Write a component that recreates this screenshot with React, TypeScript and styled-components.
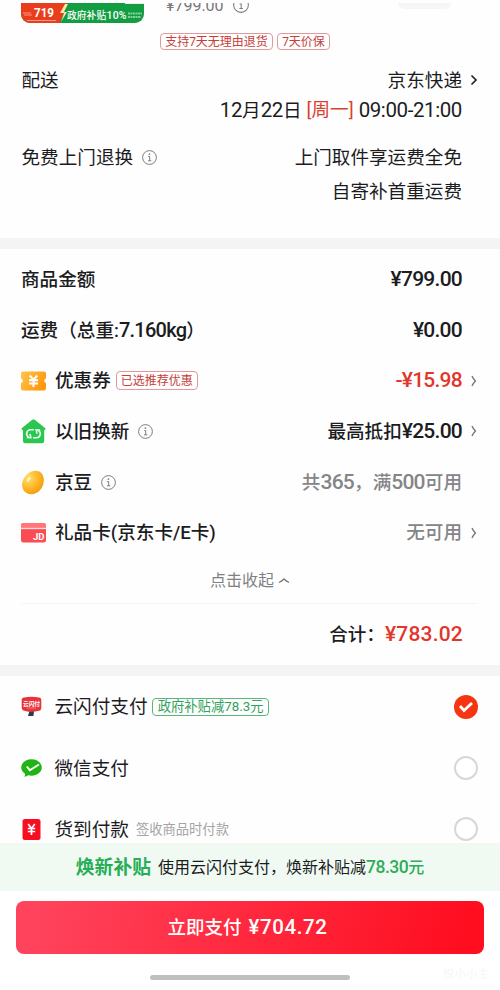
import React from "react";
import styled, { createGlobalStyle } from "styled-components";

const GlobalStyle = createGlobalStyle`
  * { box-sizing: border-box; }
  body {
    margin: 0;
    background: #fff;
    color: #1c1c1e;
    font-family: Roboto, "Noto Sans CJK SC", sans-serif;
    font-size: 18.6px;
    line-height: 1;
  }
`;

const Page = styled.main`
  width: 500px;
  height: 990px;
  padding-top: 3px;
  display: flex;
  flex-direction: column;
  overflow: hidden;
  background: #fefefe;
`;

const Product = styled.section`
  height: 60px;
  flex: none;
  display: flex;
  align-items: flex-start;
  overflow: hidden;
  padding-left: 21px;
`;

const PromoBadge = styled.div`
  width: 123px;
  height: 20px;
  margin-right: 16px;
  flex: none;
  border-radius: 0 0 9px 9px;
  overflow: hidden;
`;

const ProductInfo = styled.div`
  display: flex;
  flex-direction: column;
  width: 238px;
`;

const ProductPrice = styled.div`
  height: 30px;
  display: flex;
  align-items: flex-start;
  gap: 9px;
  margin: -5px 0 0 6px;
  color: #77777a;
  svg { margin-top: -1px; }
`;

const TagLine = styled.div`
  display: flex;
  gap: 4px;
  margin-top: 5px;
`;

const Stub = styled.div`
  width: 53px;
  height: 6px;
  border-radius: 0 0 6px 6px;
  background: #f6f6f6;
`;

const Tag = styled.span<{ $w: number; $h?: number; $size?: number; $green?: boolean }>`
  width: ${(p) => p.$w}px;
  height: ${(p) => p.$h ?? 17}px;
  flex: none;
  display: inline-flex;
  align-items: center;
  justify-content: center;
  border: 1px solid ${(p) => (p.$green ? "#59b77c" : "#e09a98")};
  border-radius: 4px;
  color: ${(p) => (p.$green ? "#31a25c" : "#c5403b")};
  font-size: ${(p) => p.$size ?? 12}px;
  font-weight: 400;
  white-space: nowrap;
`;

const CouponTag = styled(Tag)`
  margin-left: -4px;
`;

const Delivery = styled.section`
  height: 175px;
  flex: none;
  padding: 0 38px 0 21.5px;
  display: flex;
  flex-direction: column;
`;

const Line = styled.div<{ $h: number }>`
  height: ${(p) => p.$h}px;
  display: flex;
  align-items: center;
  justify-content: space-between;
  white-space: nowrap;
`;

const Divider = styled.div`
  height: 11px;
  flex: none;
  background: #f4f4f4;
`;

const Amounts = styled.section`
  height: 416px;
  flex: none;
  padding: 5px 38px 0 21px;
`;

const Row = styled.div`
  height: 50.7px;
  display: flex;
  align-items: center;
  justify-content: space-between;
  white-space: nowrap;
  font-weight: 500;
`;

const Label = styled.div`
  display: flex;
  align-items: center;
  gap: 9px;
`;

const Value = styled.div<{ $color?: string }>`
  display: flex;
  align-items: center;
  color: ${(p) => p.$color ?? "inherit"};
`;

const Txt = styled.span`
  padding-top: 2px;
`;

const Num = styled.span<{ $size?: number; $ls?: number }>`
  font-size: ${(p) => p.$size ?? 21}px;
  letter-spacing: ${(p) => p.$ls ?? -0.75}px;
`;

const Day = styled.span`
  color: #d8402f;
  margin: 0 5px;
`;

const ChevronSlot = styled.span`
  display: flex;
  width: 8px;
  margin: 0 -16px 0 8px;
`;

const Collapse = styled.div`
  height: 45px;
  display: flex;
  align-items: center;
  justify-content: center;
  gap: 4px;
  margin-right: -17px;
  font-size: 16px;
  color: #808083;
`;

const Total = styled.div`
  height: 62px;
  margin-right: -16px;
  padding-right: 15px;
  border-top: 1px solid #f4f4f4;
  display: flex;
  align-items: center;
  justify-content: flex-end;
  font-weight: 500;
`;

const Payments = styled.section`
  height: 167px;
  flex: none;
  overflow: hidden;
  padding: 0 22px 0 21px;
`;

const PayRow = styled.div`
  height: 61.4px;
  display: flex;
  align-items: center;
  justify-content: space-between;
`;

const PayLabel = styled.div`
  display: flex;
  align-items: center;
  white-space: nowrap;
  svg { margin-right: 12.5px; }
`;

const PayNote = styled.span`
  margin-left: 7px;
  font-size: 13.3px;
  color: #a5a5a5;
`;

const Radio = styled.span<{ $on?: boolean }>`
  width: 24px;
  height: 24px;
  display: flex;
  align-items: center;
  justify-content: center;
  border-radius: 50%;
  border: ${(p) => (p.$on ? "0" : "2px solid #d7d7d7")};
  background: ${(p) => (p.$on ? "#f53610" : "#fff")};
`;

const Subsidy = styled.section`
  height: 48px;
  flex: none;
  display: flex;
  align-items: center;
  justify-content: center;
  background: #f0faf3;
  font-size: 16px;
  white-space: nowrap;
`;

const SubsidyTitle = styled.strong`
  margin-right: 7px;
  padding-top: 2px;
  font-size: 18.8px;
  font-weight: 700;
  color: #27ad55;
`;

const SubsidyAmount = styled.span`
  padding-top: 2px;
  color: #2eac59;
  font-weight: 500;
`;

const Footer = styled.footer`
  height: 99px;
  flex: none;
  padding: 10px 16px 0;
  display: grid;
  grid-template-rows: 53px 21px 5px;
  background: #fff;
`;

const PayButton = styled.button`
  border: 0;
  border-radius: 8px;
  padding: 0 5px 0 0;
  display: flex;
  align-items: center;
  justify-content: center;
  gap: 7px;
  color: #fff;
  font: 500 18.5px/1 Roboto, "Noto Sans CJK SC", sans-serif;
  background: linear-gradient(100deg, #ff435c 5%, #ff0e20 95%);
`;

const Watermark = styled.div`
  align-self: end;
  justify-self: end;
  margin: 0 -5px -5px 0;
  font-size: 11.5px;
  color: #f6f6f6;
`;

const HomeBar = styled.div`
  width: 200px;
  height: 5px;
  justify-self: center;
  border-radius: 3px;
  background: #bfbfbf;
`;

const Info = ({ size = 15 }: { size?: number }) => (
  <svg width={size} height={size} viewBox="0 0 15 15" fill="none" stroke="#7d7d80">
    <circle cx="7.5" cy="7.5" r="6.9" />
    <path d="M6.2 6.5h1.5v4.2M6 10.8h3.3" />
    <circle cx="7.4" cy="4.1" r=".9" fill="#7d7d80" stroke="none" />
  </svg>
);

const Chevron = ({ dark }: { dark?: boolean }) => (
  <ChevronSlot>
    <svg width="8" height="12" viewBox="0 0 8 12" fill="none" stroke={dark ? "#222" : "#77777a"} strokeWidth={dark ? 1.7 : 1.4}>
      <path d={dark ? "M1.5 1.5 6 6 1.5 10.5" : "M2 1 Q3 3.5 5.4 6 Q3 8.5 2 11"} />
    </svg>
  </ChevronSlot>
);

const CouponIcon = () => (
  <svg width="25" height="20" viewBox="0 0 25 20">
    <defs>
      <linearGradient id="coupon" x1="0" y1="0" x2="1" y2=".5">
        <stop stopColor="#ffc64c" />
        <stop offset="1" stopColor="#ff980e" />
      </linearGradient>
    </defs>
    <path d="M2 .5h21a2 2 0 0 1 2 2v5a2.300 2.300 0 0 0 0 4.500v5.500a2 2 0 0 1-2 2H2a2 2 0 0 1-2-2V12a2.300 2.300 0 0 0 0-4.500v-5a2 2 0 0 1 2-2z" fill="url(#coupon)" />
    <path d="m8.700 4.500 3.800 4.200 3.800-4.200M12.500 8.500v7.500M8 9.300h9M8 12.500h9" fill="none" stroke="#fff" strokeWidth="2" />
  </svg>
);

const HouseIcon = () => (
  <svg width="25" height="25" viewBox="0 0 25 25">
    <path d="M11.300.8Q12.500-.2 13.700.8L24 9q1.500 1.500-.8 2.200V22a2.300 2.300 0 0 1-2.300 2.300H4.200A2.300 2.300 0 0 1 2 22V11.200Q-.5 10.500 1 9z" fill="#2bc64f" />
    <path d="M13 10.800H9.500a3.900 3.900 0 0 0-1.800 7.300M12 18.700h3.500a3.900 3.900 0 0 0 1.800-7.300M5.800 18.400l4 .3-.8-3.800M19.200 11.100l-4-.3.8 3.800" fill="none" stroke="#e3ffe9" strokeWidth="1.600" />
  </svg>
);

const BeanIcon = () => (
  <svg width="25" height="25" viewBox="0 0 25 25">
    <defs>
      <radialGradient id="bean" cx=".3" cy=".3" r=".85">
        <stop stopColor="#ffe06d" />
        <stop offset=".5" stopColor="#ffb92c" />
        <stop offset="1" stopColor="#f29200" />
      </radialGradient>
    </defs>
    <path d="M1.300 17C0 11 4.800 1.500 14 .7c6-.3 9.200 4.600 8.800 10.300C22.200 18.500 17 24 10.500 24.200c-4.500.2-8.200-2.700-9.200-7.200z" fill="url(#bean)" />
    <ellipse cx="7.700" cy="9.500" rx="1.300" ry="2.800" fill="#fff7cf" transform="rotate(35 7.700 9.500)" />
  </svg>
);

const CardIcon = () => (
  <svg width="25" height="20" viewBox="0 0 25 20">
    <rect width="25" height="19.500" rx="2.500" fill="#fa4c55" />
    <path d="M0 5V2.500A2.500 2.500 0 0 1 2.500 0h20A2.500 2.500 0 0 1 25 2.500V5z" fill="#ff777b" />
    <path d="M0 5.500h25" stroke="#ffd9da" strokeWidth="1.300" />
    <text x="12" y="17" fill="#fff" fontFamily="Roboto" fontSize="9.500" fontWeight="700" textLength="11.500" lengthAdjust="spacingAndGlyphs">JD</text>
  </svg>
);

const UnionIcon = () => (
  <svg width="21" height="21" viewBox="0 0 21 21">
    <path d="M3 1.500Q10.500.2 18 1.500q2.300.2 2.300 3v7q0 3.500-3.500 3.500L10 16.200 4 15Q.7 14.500.7 11.500v-7q0-2.800 2.300-3z" fill="#e9333c" />
    <text x="2" y="9.800" fill="#fff" fontFamily="Noto Sans CJK SC" fontSize="5.700" fontWeight="700">云闪付</text>
    <path d="M6 12h9" stroke="#ff9b9b" strokeWidth=".7" />
    <path d="m8.200 16 4.800-.4-.6 4.400H7z" fill="#293d42" />
  </svg>
);

const WechatIcon = () => (
  <svg width="21" height="18" viewBox="0 0 21 18">
    <path d="M10.500.3C16.200.3 20.800 4 20.800 8.500s-4.600 8.200-10.300 8.200a12 12 0 0 1-3.200-.4L3.600 18l.5-3.200C1.700 13.300.2 11 .2 8.500.2 4 4.800.3 10.500.3z" fill="#20b512" />
    <path d="m5.800 7.500 3 3.700L18 5.500" fill="none" stroke="#fff" strokeWidth="1.900" />
  </svg>
);

const CashIcon = () => (
  <svg width="21" height="21" viewBox="0 0 21 21">
    <rect x="1.500" width="18" height="21" rx="2.500" fill="#f70e23" />
    <path d="m7.200 5 3.300 4.500L13.800 5M10.500 9v7M6.800 9.500h7.400M6.800 12.500h7.400" fill="none" stroke="#fff" strokeWidth="1.700" />
  </svg>
);

const BadgeArt = () => (
  <svg width="123" height="20" viewBox="0 0 123 20">
    <rect width="123" height="20" fill="#129d43" />
    <path d="M0 0h46l-7 20H0z" fill="#e83e1d" />
    <path d="m44 1-5 9h4l-3 9 6-10h-3l4-8z" fill="#ffe5a0" />
    <text x="13" y="14" fill="#fff" fontFamily="Roboto" fontSize="13" fontWeight="700" textLength="20" lengthAdjust="spacingAndGlyphs">719</text>
    <path d="M2 10h8M3 12h8M6 17.500h29" stroke="#ffb29c" strokeWidth=".8" />
    <text x="46" y="15.500" fill="#fff" fontFamily="Noto Sans CJK SC" fontSize="9.800" fontWeight="500">政府补贴</text>
    <text x="85.500" y="15.500" fill="#fff" fontFamily="Roboto" fontSize="10.500" fontWeight="500" textLength="20">10%</text>
    <path d="M107 10.500h14M107 14h13" stroke="#80cf9b" strokeWidth="1.800" strokeDasharray="2 .5" />
    <path d="M104 0h19v1h-19z" fill="#e8ece9" />
  </svg>
);

export default function App() {
  return (
    <>
      <GlobalStyle />
      <Page>
        <Product>
          <PromoBadge><BadgeArt /></PromoBadge>
          <ProductInfo>
            <ProductPrice>
              <Num $size={16} $ls={0}>¥799.00</Num>
              <Info size={16} />
            </ProductPrice>
            <TagLine>
              <Tag $w={113}>支持7天无理由退货</Tag>
              <Tag $w={53}>7天价保</Tag>
            </TagLine>
          </ProductInfo>
          <Stub />
        </Product>

        <Delivery>
          <Line $h={34}>
            <Txt>配送</Txt>
            <Value><Txt>京东快递</Txt><Chevron dark /></Value>
          </Line>
          <Line $h={26}>
            <span />
            <Value>
              <Num $size={20.5} $ls={-0.4}>12</Num><Txt>月</Txt>
              <Num $size={20.5} $ls={-0.4}>22</Num><Txt>日</Txt>
              <Day>[周一]</Day>
              <Num $size={20.5} $ls={-0.4}>09:00-21:00</Num>
            </Value>
          </Line>
          <Line $h={68}>
            <Label><Txt>免费上门退换</Txt><Info /></Label>
            <Value><Txt>上门取件享运费全免</Txt></Value>
          </Line>
          <Line $h={1}>
            <span />
            <Value><Txt>自寄补首重运费</Txt></Value>
          </Line>
        </Delivery>
        <Divider />

        <Amounts>
          <Row>
            <Txt>商品金额</Txt>
            <Value><Num>¥799.00</Num></Value>
          </Row>
          <Row>
            <span>运费（总重:<Num $size={20}>7.160kg</Num>）</span>
            <Value><Num>¥0.00</Num></Value>
          </Row>
          <Row>
            <Label><CouponIcon /><Txt>优惠券</Txt><CouponTag $w={82} $h={19}>已选推荐优惠</CouponTag></Label>
            <Value $color="#e3352c"><Num>-¥15.98</Num><Chevron /></Value>
          </Row>
          <Row>
            <Label><HouseIcon /><Txt>以旧换新</Txt><Info /></Label>
            <Value><Txt>最高抵扣</Txt><Num>¥25.00</Num><Chevron /></Value>
          </Row>
          <Row>
            <Label><BeanIcon /><Txt>京豆</Txt><Info /></Label>
            <Value $color="#858588">
              <Txt>共</Txt><Num>365</Num><Txt>，满</Txt><Num>500</Num><Txt>可用</Txt>
            </Value>
          </Row>
          <Row>
            <Label><CardIcon /><Txt>礼品卡(京东卡/E卡)</Txt></Label>
            <Value $color="#858588"><Txt>无可用</Txt><Chevron /></Value>
          </Row>
          <Collapse>
            点击收起
            <svg width="12" height="7" viewBox="0 0 12 7" fill="none" stroke="#77777a" strokeWidth="1.300">
              <path d="M1 5.500Q4 4 6 2q2 2 5 3.500" />
            </svg>
          </Collapse>
          <Total>
            <Txt>合计：</Txt><Value $color="#e3352c"><Num $ls={0.2}>¥783.02</Num></Value>
          </Total>
        </Amounts>
        <Divider />

        <Payments>
          <PayRow>
            <PayLabel>
              <UnionIcon /><Txt>云闪付支付&nbsp;</Txt>
              <Tag $w={117} $h={18} $size={13.3} $green>政府补贴减78.3元</Tag>
            </PayLabel>
            <Radio $on>
              <svg width="16" height="12" viewBox="0 0 16 12" fill="none" stroke="#fff" strokeWidth="2.800">
                <path d="m2 5 4 4.500L14 2" />
              </svg>
            </Radio>
          </PayRow>
          <PayRow>
            <PayLabel><WechatIcon /><Txt>微信支付</Txt></PayLabel>
            <Radio />
          </PayRow>
          <PayRow>
            <PayLabel><CashIcon /><Txt>货到付款</Txt><PayNote>签收商品时付款</PayNote></PayLabel>
            <Radio />
          </PayRow>
        </Payments>

        <Subsidy>
          <SubsidyTitle>焕新补贴</SubsidyTitle>
          <Txt>使用云闪付支付，焕新补贴减</Txt>
          <SubsidyAmount><Num $size={17.5} $ls={-0.5}>78.30</Num>元</SubsidyAmount>
        </Subsidy>
        <Footer>
          <PayButton><Txt>立即支付</Txt><Num $size={20.5} $ls={0.6}>¥704.72</Num></PayButton>
          <Watermark>悦小小主</Watermark>
          <HomeBar />
        </Footer>
      </Page>
    </>
  );
}
